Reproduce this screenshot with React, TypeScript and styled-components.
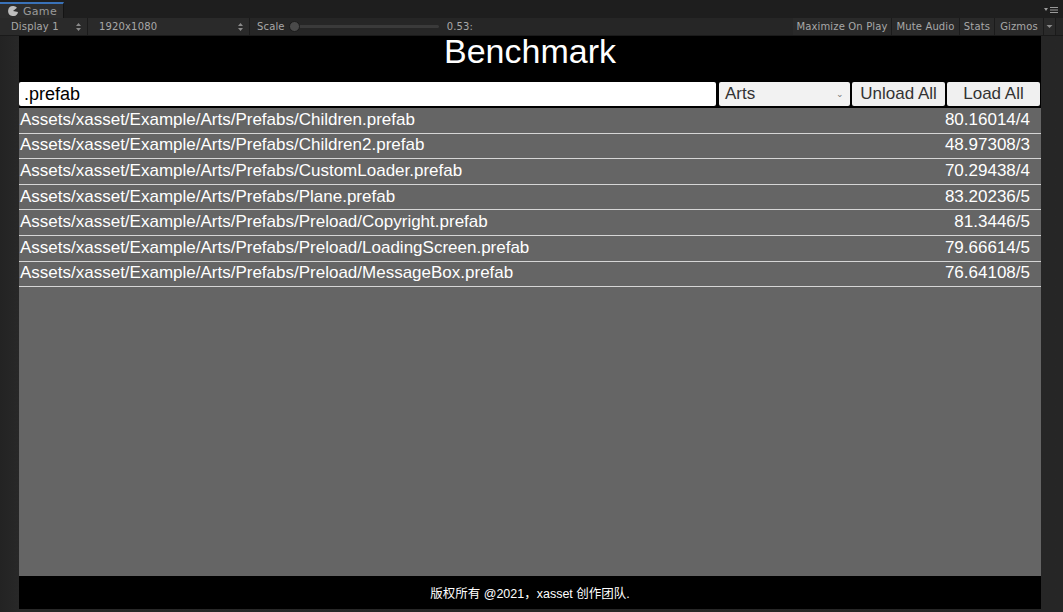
import styled, { createGlobalStyle } from "styled-components";

const GlobalStyle = createGlobalStyle`
  html, body {
    margin: 0;
    padding: 0;
    background: #1f1f1f;
  }
  * {
    box-sizing: border-box;
  }
`;

const Window = styled.div`
  width: 1063px;
  height: 612px;
  display: flex;
  flex-direction: column;
  background: #1f1f1f;
  overflow: hidden;
  font-family: "DejaVu Sans", sans-serif;
`;

const TabBar = styled.div`
  height: 18px;
  display: flex;
  align-items: flex-end;
  justify-content: space-between;
  background: #1e1e1e;
`;

const Tab = styled.div`
  height: 16px;
  width: 64px;
  display: flex;
  align-items: center;
  gap: 5px;
  padding-left: 8px;
  background: #2d2d2d;
  border-top: 2px solid #3a72b8;
  border-right: 1px solid #141414;
  color: #9a9a9a;
  font-size: 11px;
  letter-spacing: 0.3px;
`;

const PaneMenu = styled.div`
  display: flex;
  align-items: center;
  padding: 0 5px 4px 0;
`;

const Toolbar = styled.div`
  height: 18px;
  display: flex;
  align-items: stretch;
  background: #262626;
  border-bottom: 1px solid #1a1a1a;
  color: #a8a8a8;
  font-size: 10px;
  letter-spacing: 0.15px;
`;

const ToolItem = styled.div<{ $w?: number; $center?: boolean }>`
  display: flex;
  align-items: center;
  justify-content: ${(p) => (p.$center ? "center" : "space-between")};
  gap: 6px;
  padding: ${(p) => (p.$center ? "0" : "0 6px 0 11px")};
  width: ${(p) => (p.$w ? `${p.$w}px` : "auto")};
  border-right: 1px solid #1b1b1b;
  background: #2a2a2a;
  white-space: nowrap;
`;

const Spacer = styled.div<{ $w?: number }>`
  flex: ${(p) => (p.$w ? `0 0 ${p.$w}px` : "1")};
`;

const Slider = styled.div`
  display: flex;
  align-items: center;
  gap: 8px;
  padding-left: 7px;
`;

const Track = styled.div`
  position: relative;
  width: 146px;
  height: 3px;
  background: #3a3a3a;
  border-radius: 2px;
`;

const Knob = styled.div`
  position: absolute;
  left: -4px;
  top: -4px;
  width: 11px;
  height: 11px;
  border-radius: 50%;
  background: #4a4a4a;
  border: 1px solid #1c1c1c;
`;

const Body = styled.div`
  flex: 1;
  display: flex;
  padding: 0 22px 3px 19px;
  background: linear-gradient(90deg, #232323, #282828 19px, #262626);
`;

const Game = styled.div`
  flex: 1;
  display: flex;
  flex-direction: column;
  background: #000;
  font-family: "Liberation Sans", "Noto Sans CJK SC", sans-serif;
  color: #fff;
`;

const Title = styled.div`
  height: 46px;
  text-align: center;
  font-size: 34px;
  line-height: 30px;
`;

const Controls = styled.div`
  display: flex;
  gap: 2px;
  height: 24px;
  margin-bottom: 2px;
  padding-right: 1px;
`;

const SearchInput = styled.div`
  flex: 1;
  background: #fff;
  color: #000;
  font-size: 18px;
  line-height: 24px;
  padding-left: 5px;
  border-radius: 2px;
`;

const Select = styled.div`
  width: 131px;
  margin-left: 1px;
  display: flex;
  align-items: center;
  justify-content: space-between;
  padding: 0 6px;
  background: #f2f2f2;
  color: #333;
  font-size: 17px;
  border-radius: 2px;
`;

const Chevron = styled.span`
  font-size: 9px;
  color: #777;
`;

const Button = styled.div<{ $w: number }>`
  width: ${(p) => p.$w}px;
  display: flex;
  align-items: center;
  justify-content: center;
  background: #f0f0f0;
  color: #333;
  font-size: 17px;
  border-radius: 2px;
`;

const List = styled.div`
  flex: 1;
  background: #656565;
  display: flex;
  flex-direction: column;
`;

const Row = styled.div`
  height: 25.6px;
  display: flex;
  align-items: center;
  justify-content: space-between;
  padding: 0 11px 1px 1px;
  border-bottom: 1.5px solid #d6d6d6;
  font-size: 17px;
  color: #fff;
`;

const Footer = styled.div`
  height: 33px;
  display: flex;
  align-items: center;
  justify-content: center;
  font-size: 12.5px;
  color: #fff;
`;

const rows: [string, string][] = [
  ["Assets/xasset/Example/Arts/Prefabs/Children.prefab", "80.16014/4"],
  ["Assets/xasset/Example/Arts/Prefabs/Children2.prefab", "48.97308/3"],
  ["Assets/xasset/Example/Arts/Prefabs/CustomLoader.prefab", "70.29438/4"],
  ["Assets/xasset/Example/Arts/Prefabs/Plane.prefab", "83.20236/5"],
  ["Assets/xasset/Example/Arts/Prefabs/Preload/Copyright.prefab", "81.3446/5"],
  ["Assets/xasset/Example/Arts/Prefabs/Preload/LoadingScreen.prefab", "79.66614/5"],
  ["Assets/xasset/Example/Arts/Prefabs/Preload/MessageBox.prefab", "76.64108/5"],
];

const UpDown = () => (
  <svg width="5" height="8" viewBox="0 0 5 8">
    <path d="M0 3 L2.5 0 L5 3 Z M0 5 L2.5 8 L5 5 Z" fill="#8a8a8a" />
  </svg>
);

const GameIcon = () => (
  <svg width="10" height="10" viewBox="0 0 10 10">
    <path d="M5 0 A5 5 0 1 0 10 6 L5 5 L9 1.8 A5 5 0 0 0 5 0 Z" fill="#bdbdbd" />
  </svg>
);

const App = () => {
  return (
    <>
      <GlobalStyle />
      <Window>
        <TabBar>
          <Tab>
            <GameIcon />
            Game
          </Tab>
          <PaneMenu>
            <svg width="14" height="8" viewBox="0 0 14 8">
              <path d="M0 2 L4 2 L2 5 Z" fill="#9a9a9a" />
              <rect x="6" y="1" width="8" height="1" fill="#9a9a9a" />
              <rect x="6" y="3.5" width="8" height="1" fill="#9a9a9a" />
              <rect x="6" y="6" width="8" height="1" fill="#9a9a9a" />
            </svg>
          </PaneMenu>
        </TabBar>
        <Toolbar>
          <ToolItem $w={88}>
            Display 1 <UpDown />
          </ToolItem>
          <ToolItem $w={162}>
            1920x1080 <UpDown />
          </ToolItem>
          <Slider>
            Scale
            <Track>
              <Knob />
            </Track>
            0.53:
          </Slider>
          <Spacer />
          <ToolItem $w={99} $center>Maximize On Play</ToolItem>
          <ToolItem $w={68} $center>Mute Audio</ToolItem>
          <ToolItem $w={35} $center>Stats</ToolItem>
          <ToolItem $w={49} $center>Gizmos</ToolItem>
          <ToolItem $w={12} $center>
            <svg width="7" height="5" viewBox="0 0 7 5">
              <path d="M0.5 1 L6.5 1 L3.5 4 Z" fill="#8a8a8a" />
            </svg>
          </ToolItem>
          <Spacer $w={7} />
        </Toolbar>
        <Body>
          <Game>
            <Title>Benchmark</Title>
            <Controls>
              <SearchInput>.prefab</SearchInput>
              <Select>
                Arts
                <Chevron>⌄</Chevron>
              </Select>
              <Button $w={93}>Unload All</Button>
              <Button $w={93}>Load All</Button>
            </Controls>
            <List>
              {rows.map(([path, value]) => (
                <Row key={path}>
                  <span>{path}</span>
                  <span>{value}</span>
                </Row>
              ))}
            </List>
            <Footer>版权所有 @2021，xasset 创作团队.</Footer>
          </Game>
        </Body>
      </Window>
    </>
  );
};

export default App;
